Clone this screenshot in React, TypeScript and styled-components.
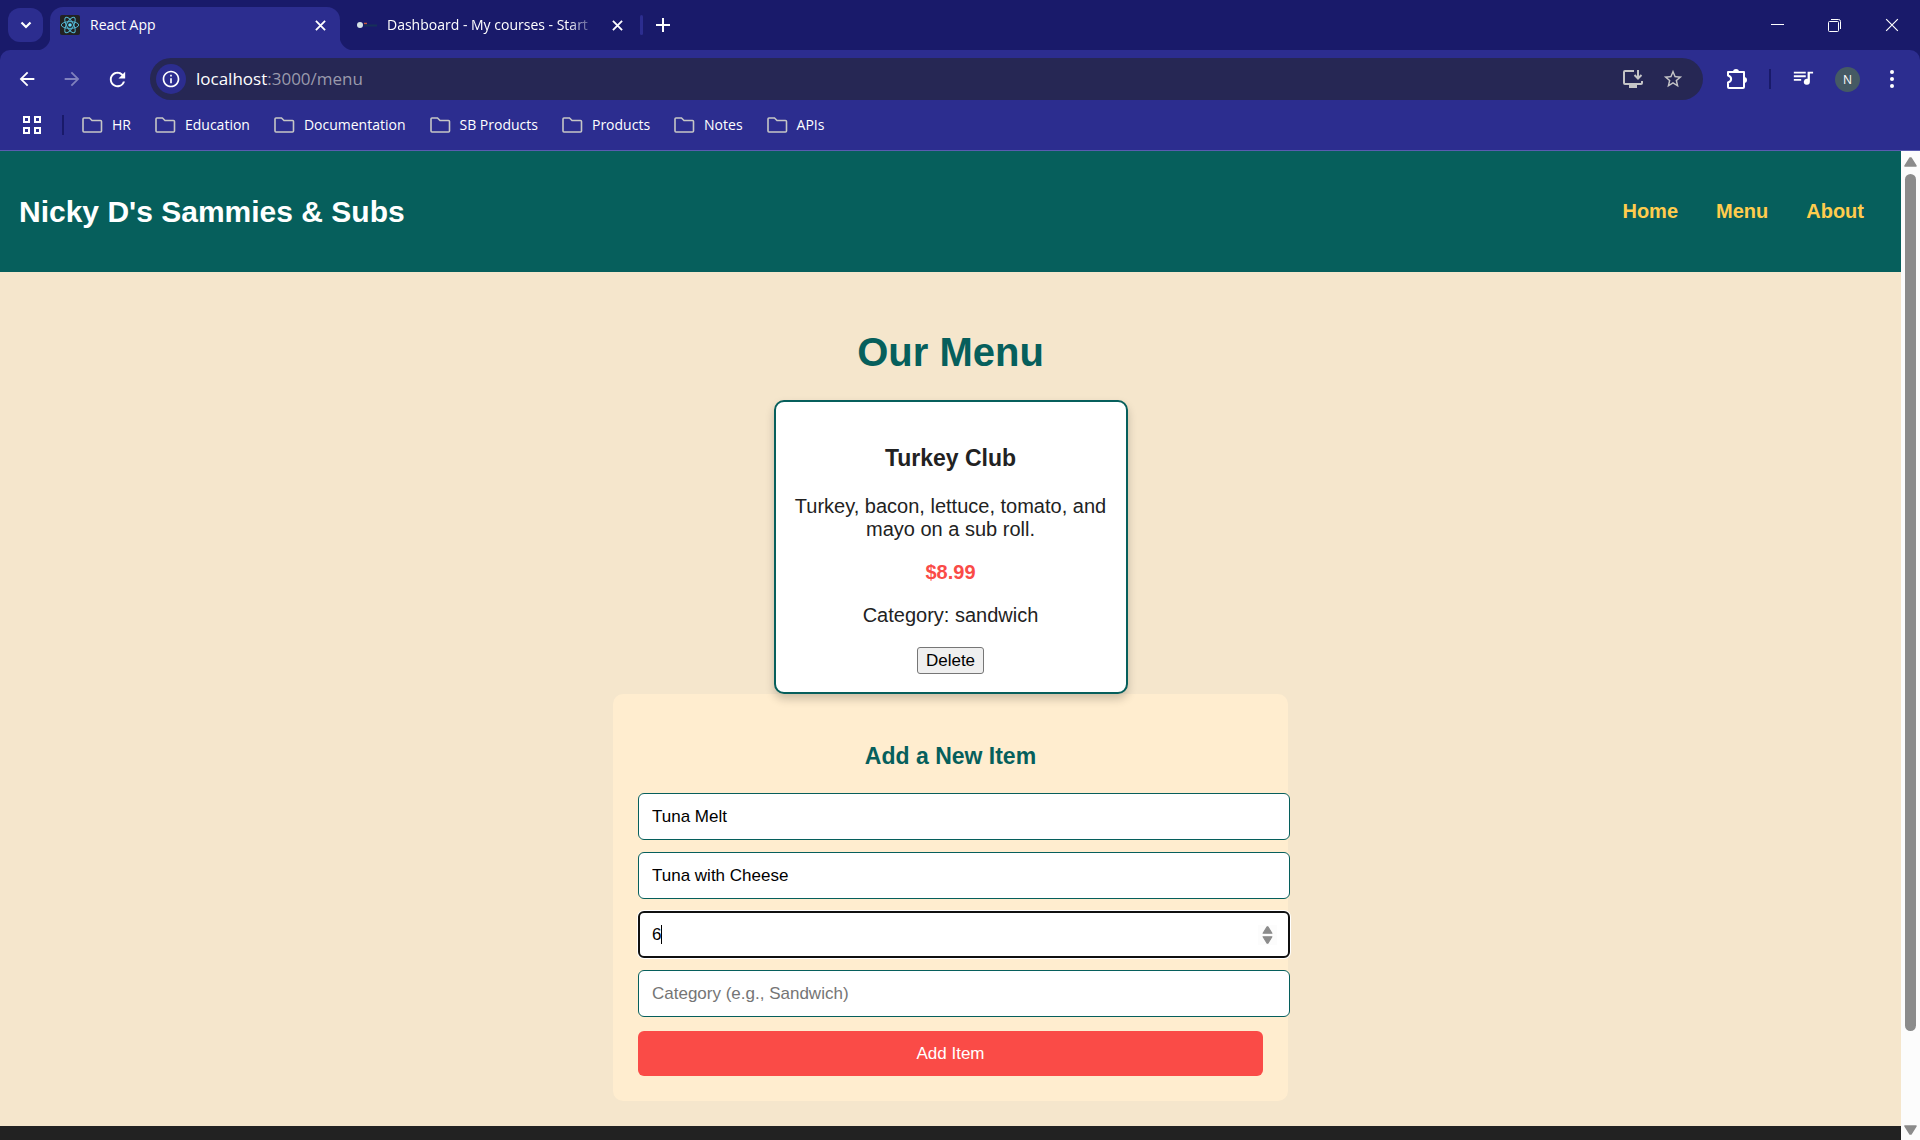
import React, { useState } from "react";
import styled, { createGlobalStyle, css } from "styled-components";

const UI_FONT = `"Open Sans", "Noto Sans", sans-serif`;
const PAGE_FONT = `"Liberation Sans", Arial, sans-serif`;

const color = {
  strip: "#191a6a",
  bar: "#2c2d8f",
  omnibox: "#262754",
  teal: "#065f5c",
  cream: "#f5e6cc",
  panel: "#ffedcf",
  red: "#fa4b47",
  yellow: "#ffcc4d",
  ink: "#222222",
};

const GlobalStyle = createGlobalStyle`
  * { box-sizing: border-box; }
  body { margin: 0; overflow: hidden; }
  button { font: inherit; cursor: pointer; }
`;

const Window = styled.div`
  display: flex;
  flex-direction: column;
  height: 100vh;
  background: ${color.strip};
  font-family: ${UI_FONT};
  color: #fff;
`;

/* ---------- tab strip ---------- */

const TabStrip = styled.header`
  display: flex;
  align-items: flex-end;
  height: 50px;
  padding-left: 8px;
`;

const TabSearch = styled.button`
  display: grid;
  place-items: center;
  width: 35px;
  height: 34px;
  margin: 0 7px 8px 0;
  padding: 0;
  border: 0;
  border-radius: 12px;
  background: ${color.bar};
`;

const Tab = styled.div<{ $active?: boolean }>`
  position: relative;
  display: flex;
  align-items: center;
  gap: 10px;
  width: 290px;
  height: 43px;
  padding: 0 10px 7px 10px;
  font-size: 14px;
  line-height: 20px;
  ${(p) =>
    p.$active
      ? css`
          border-radius: 13px 13px 0 0;
          background: ${color.bar};
          &::before,
          &::after {
            content: "";
            position: absolute;
            bottom: 0;
            width: 14px;
            height: 14px;
          }
          &::before {
            right: 100%;
            background: radial-gradient(circle at 0 0, transparent 14px, ${color.bar} 15px);
          }
          &::after {
            left: 100%;
            background: radial-gradient(circle at 100% 0, transparent 14px, ${color.bar} 15px);
          }
        `
      : css`
          padding-left: 17px;
          padding-right: 3px;
        `}
`;

const TabTitle = styled.span<{ $fade?: boolean }>`
  flex: 1;
  overflow: hidden;
  white-space: nowrap;
  ${(p) => p.$fade && css`mask-image: linear-gradient(to right, #000 86%, transparent);`}
`;

const IconButton = styled.button<{ $w?: number }>`
  display: grid;
  place-items: center;
  flex: none;
  width: ${(p) => p.$w ?? 20}px;
  height: 30px;
  padding: 0;
  border: 0;
  background: none;
  color: inherit;
  svg { display: block; }
`;

const TabDivider = styled.i`
  width: 3px;
  height: 20px;
  margin: 0 10px 15px 10px;
  border-radius: 2px;
  background: ${color.bar};
`;

const NewTabSlot = styled.div`
  padding-bottom: 10px;
`;

const WindowControls = styled.div`
  display: flex;
  align-self: flex-start;
  margin-left: auto;
  padding-top: 10px;
`;

/* ---------- toolbar ---------- */

const Toolbar = styled.div`
  display: flex;
  align-items: center;
  height: 58px;
  padding: 0 12px 0 10px;
  border-radius: 10px 10px 0 0;
  background: ${color.bar};
`;

const NavButtons = styled.div`
  display: flex;
  gap: 11px;
  margin-right: 16px;
`;

const Omnibox = styled.div`
  display: flex;
  align-items: center;
  flex: 1;
  height: 42px;
  padding: 0 14px 0 6px;
  border-radius: 21px;
  background: ${color.omnibox};
  color: #c4c4c6;
`;

const SiteInfo = styled.button`
  display: grid;
  place-items: center;
  width: 30px;
  height: 30px;
  padding: 0;
  border: 0;
  border-radius: 50%;
  background: ${color.bar};
`;

const Address = styled.div`
  flex: 1;
  margin-left: 10px;
  color: #9a9aac;
  font-size: 17px;
  line-height: 24px;
  strong { color: #fff; font-weight: 400; }
`;

const OmniActions = styled.div`
  display: flex;
  gap: 8px;
`;

const ToolbarActions = styled.div`
  display: flex;
  align-items: center;
  margin-left: 18px;
`;

const BarDivider = styled.i<{ $gap: number }>`
  flex: none;
  width: 2px;
  height: 20px;
  margin: 0 ${(p) => p.$gap}px;
  background: ${color.strip};
`;

const Avatar = styled.button`
  width: 25px;
  height: 25px;
  margin: 0 16px;
  padding: 0;
  border: 0;
  border-radius: 50%;
  background: #455a64;
  color: #fff;
  font-size: 12px;
  line-height: 25px;
`;

/* ---------- bookmarks ---------- */

const Bookmarks = styled.nav`
  display: flex;
  align-items: center;
  height: 43px;
  padding: 0 17px 8px 17px;
  border-bottom: 1px solid #5a5bb0;
  background: ${color.bar};
`;

const BookmarkList = styled.div`
  display: flex;
  gap: 24px;
  padding-left: 3px;
`;

const Bookmark = styled.button`
  display: flex;
  align-items: center;
  gap: 9px;
  padding: 0;
  border: 0;
  background: none;
  color: #fff;
  font-size: 14px;
  line-height: 20px;
  white-space: nowrap;
`;

/* ---------- page ---------- */

const Viewport = styled.div`
  display: flex;
  flex: 1;
  min-height: 0;
`;

const Page = styled.div`
  flex: 1;
  overflow: hidden;
  background: ${color.cream};
  color: ${color.ink};
  font-family: ${PAGE_FONT};
  font-size: 20px;
  line-height: 23px;
`;

const SiteHeader = styled.header`
  display: flex;
  align-items: center;
  justify-content: space-between;
  height: 121px;
  padding: 0 37px 0 19px;
  background: ${color.teal};
`;

const Brand = styled.h2`
  margin: 0;
  color: #fff;
  font-size: 30px;
  line-height: 34px;
`;

const SiteNav = styled.nav`
  display: flex;
  gap: 38px;
  a {
    color: ${color.yellow};
    font-weight: 700;
    text-decoration: none;
  }
`;

const Main = styled.main`
  display: flex;
  flex-direction: column;
  align-items: center;
  padding: 57px 25px 25px;
  text-align: center;
`;

const PageTitle = styled.h1`
  margin: 0 0 25px;
  color: ${color.teal};
  font-size: 40px;
  line-height: 46px;
`;

const Card = styled.article`
  position: relative;
  width: 354px;
  padding: 20px 19px 18px;
  border: 2px solid ${color.teal};
  border-radius: 10px;
  background: #fff;
  box-shadow: 0 5px 10px rgba(0, 0, 0, 0.2);
  p { margin: 0 0 20px; }
`;

const SectionTitle = styled.h3<{ $tone?: string }>`
  margin: 23px 0;
  color: ${(p) => p.$tone ?? "inherit"};
  font-size: 23px;
  line-height: 27px;
`;

const Price = styled.p`
  color: ${color.red};
  font-weight: 700;
`;

const DeleteButton = styled.button`
  display: block;
  height: 27px;
  margin: 0 auto;
  padding: 0 8px;
  border: 1px solid #767676;
  border-radius: 3px;
  background: #efefef;
  color: #000;
  font-size: 17px;
  line-height: 23px;
`;

const Form = styled.form`
  display: flex;
  flex-direction: column;
  width: 675px;
  padding: 26px 25px 25px;
  border-radius: 10px;
  background: ${color.panel};
`;

const Fields = styled.div`
  display: grid;
  gap: 12px;
  margin-bottom: 14px;
`;

const Field = styled.div`
  position: relative;
  width: calc(100% + 27px);
`;

const Input = styled.input<{ $focused?: boolean }>`
  display: block;
  width: 100%;
  height: 47px;
  padding: 0 13px;
  border: 1px solid ${color.teal};
  border-radius: 6px;
  background: #fff;
  color: #000;
  font-family: inherit;
  font-size: 17px;
  outline: none;
  appearance: textfield;
  &::placeholder { color: #757575; }
  &::-webkit-inner-spin-button { display: none; }
  ${(p) =>
    p.$focused &&
    css`
      padding: 0 12px;
      border: 2px solid #101010;
      box-shadow: 0 0 0 1px #fff;
    `}
`;

const Caret = styled.i`
  position: absolute;
  top: 14px;
  left: 23px;
  width: 1px;
  height: 19px;
  background: #000;
`;

const Spinner = styled.div`
  position: absolute;
  top: 14px;
  right: 13px;
  display: grid;
  place-items: center;
  width: 19px;
  height: 20px;
  background: #fcfcfc;
`;

const SubmitButton = styled.button`
  height: 45px;
  border: 0;
  border-radius: 6px;
  background: ${color.red};
  color: #fff;
  font-size: 17px;
`;

const Footer = styled.footer`
  height: 120px;
  background: #222;
`;

const ScrollBar = styled.div`
  display: flex;
  flex-direction: column;
  align-items: center;
  gap: 7px;
  width: 19px;
  padding: 6px 0 5px;
  background: #fcfcfc;
`;

const Thumb = styled.div`
  flex: none;
  width: 11px;
  height: calc(100% - 121px);
  border-radius: 6px;
  background: #8b8b8b;
`;

const ArrowSlot = styled.div<{ $end?: boolean }>`
  margin-top: ${(p) => (p.$end ? "auto" : "0")};
  line-height: 0;
`;

/* ---------- drawings ---------- */

const Cross = ({ size = 11, weight = 2 }: { size?: number; weight?: number }) => (
  <svg width={size} height={size} viewBox="0 0 12 12" stroke="#fff" strokeWidth={weight} fill="none">
    <path d="M1 1l10 10M11 1L1 11" />
  </svg>
);

const ReactLogo = () => (
  <svg width="20" height="20" viewBox="0 0 20 20" fill="none" stroke="#53b5cf" strokeWidth="1">
    <rect width="20" height="20" rx="2" fill="#222" stroke="none" />
    <ellipse cx="10" cy="10" rx="8.7" ry="3.4" />
    <ellipse cx="10" cy="10" rx="8.7" ry="3.4" transform="rotate(60 10 10)" />
    <ellipse cx="10" cy="10" rx="8.7" ry="3.4" transform="rotate(120 10 10)" />
    <circle cx="10" cy="10" r="1.8" fill="#61dafb" stroke="none" />
  </svg>
);

const CourseLogo = () => (
  <svg width="20" height="20" viewBox="0 0 20 20">
    <circle cx="3" cy="10" r="3" fill="#d5e2e6" />
    <path d="M7 8.500h3" stroke="#c8553d" strokeWidth="1.500" />
    <path d="M7 10.500h13" stroke="#163058" strokeWidth="2" />
  </svg>
);

const Glyph = ({ d, size = 24, fill = "#fff" }: { d: string; size?: number; fill?: string }) => (
  <svg width={size} height={size} viewBox="0 0 24 24" fill={fill}>
    <path d={d} />
  </svg>
);

const BACK = "M20 11H7.830l5.590-5.590L12 4l-8 8 8 8 1.410-1.410L7.830 13H20v-2z";
const FORWARD = "M12 4l-1.410 1.410L16.170 11H4v2h12.170l-5.580 5.590L12 20l8-8z";
const RELOAD =
  "M17.650 6.350A7.958 7.958 0 0 0 12 4c-4.420 0-7.990 3.580-7.990 8s3.570 8 7.990 8c3.730 0 6.840-2.550 7.730-6h-2.080A5.990 5.990 0 0 1 12 18c-3.310 0-6-2.690-6-6s2.690-6 6-6c1.660 0 3.140.690 4.220 1.780L13 11h7V4l-2.350 2.350z";
const INFO =
  "M11 7h2v2h-2zm0 4h2v6h-2zm1-9C6.480 2 2 6.480 2 12s4.480 10 10 10 10-4.480 10-10S17.520 2 12 2zm0 18c-4.410 0-8-3.590-8-8s3.590-8 8-8 8 3.590 8 8-3.590 8-8 8z";
const STAR =
  "M22 9.240l-7.190-.620L12 2 9.190 8.630 2 9.240l5.460 4.730L5.820 21 12 17.270 18.180 21l-1.630-7.030L22 9.240zM12 15.400l-3.760 2.270 1-4.280-3.320-2.880 4.380-.380L12 6.100l1.710 4.040 4.380.380-3.320 2.880 1 4.280L12 15.400z";
const QUEUE =
  "M2 4h13v2H2zM2 8h13v2H2zM2 12h8v2H2zM17 4h6v2h-3.500v9a3.300 3.300 0 1 1-2.500-3.200z";

const InstallIcon = () => (
  <svg width="22" height="20" viewBox="0 0 22 20" fill="none" stroke="#c4c4c6" strokeWidth="2">
    <path d="M12 2H3Q2 2 2 3v11q0 1 1 1h16q1 0 1-1v-2" />
    <path d="M16 1v8M12.500 6l3.500 3.500L19.500 6" />
    <path d="M7 17.500h8" strokeWidth="3" />
  </svg>
);

const PuzzleIcon = () => (
  <svg width="22" height="22" viewBox="0 0 22 22" fill="none" stroke="#fff" strokeWidth="2">
    <path d="M2 4h16v15q0 1-1 1H3q-1 0-1-1v-4.500c4.200-1.500 4.200-5.500 0-7z" strokeLinejoin="round" />
    <path d="M7 4a3 3 0 0 1 6 0zM18 9a3 3 0 0 1 0 6z" fill="#fff" stroke="none" />
  </svg>
);

const FolderIcon = () => (
  <svg width="21" height="17" viewBox="0 0 21 17" fill="none" stroke="#c6c6c6" strokeWidth="1.600">
    <path d="M2 1h5.500l2.500 2.500h8.500q1 0 1 1V14q0 1-1 1H2q-1 0-1-1V2q0-1 1-1z" />
  </svg>
);

const AppsIcon = () => (
  <svg width="20" height="20" viewBox="0 0 20 20" fill="none" stroke="#fff" strokeWidth="2">
    <path d="M2 2h5v5H2zM13 2h5v5h-5zM2 13h5v5H2zM13 13h5v5h-5z" />
  </svg>
);

const Arrow = ({ down, w = 13, h = 10 }: { down?: boolean; w?: number; h?: number }) => (
  <svg width={w} height={h} viewBox="0 0 13 10" fill="#8b8b8b" stroke="#8b8b8b" strokeWidth="1.500" strokeLinejoin="round">
    <path d={down ? "M1 1h11L7 9H6z" : "M1 9h11L7 1H6z"} />
  </svg>
);

const folders = ["HR", "Education", "Documentation", "SB Products", "Products", "Notes", "APIs"];

const item = {
  name: "Turkey Club",
  description: "Turkey, bacon, lettuce, tomato, and mayo on a sub roll.",
  price: "$8.99",
  category: "sandwich",
};

export default function App() {
  const [draft, setDraft] = useState({
    name: "Tuna Melt",
    description: "Tuna with Cheese",
    price: "6",
    category: "",
  });
  const set = (key: keyof typeof draft) => (e: React.ChangeEvent<HTMLInputElement>) =>
    setDraft({ ...draft, [key]: e.target.value });

  return (
    <Window>
      <GlobalStyle />
      <TabStrip>
        <TabSearch aria-label="Search tabs">
          <svg width="12" height="8" viewBox="0 0 12 8" fill="none" stroke="#fff" strokeWidth="2.200">
            <path d="M1.500 1.500L6 6l4.500-4.500" />
          </svg>
        </TabSearch>
        <Tab $active>
          <ReactLogo />
          <TabTitle>React App</TabTitle>
          <IconButton aria-label="Close tab"><Cross /></IconButton>
        </Tab>
        <Tab>
          <CourseLogo />
          <TabTitle $fade>Dashboard - My courses - Start</TabTitle>
          <IconButton aria-label="Close tab"><Cross /></IconButton>
        </Tab>
        <TabDivider />
        <NewTabSlot>
          <IconButton aria-label="New tab">
            <svg width="14" height="14" viewBox="0 0 14 14" stroke="#fff" strokeWidth="2">
              <path d="M7 0v14M0 7h14" />
            </svg>
          </IconButton>
        </NewTabSlot>
        <WindowControls>
          <IconButton $w={57} aria-label="Minimize">
            <svg width="13" height="3" viewBox="0 0 13 3" stroke="#fff"><path d="M0 .5h13" /></svg>
          </IconButton>
          <IconButton $w={57} aria-label="Restore">
            <svg width="13" height="13" viewBox="0 0 13 13" fill="none" stroke="#fff">
              <rect x=".5" y="2.500" width="10" height="10" rx="1" />
              <path d="M3 .5h7.500q2 0 2 2V10" />
            </svg>
          </IconButton>
          <IconButton $w={57} aria-label="Close"><Cross size={14} weight={1} /></IconButton>
        </WindowControls>
      </TabStrip>

      <Toolbar>
        <NavButtons>
          <IconButton $w={34} aria-label="Back"><Glyph d={BACK} size={22} /></IconButton>
          <IconButton $w={34} aria-label="Forward"><Glyph d={FORWARD} size={22} fill="#8081bd" /></IconButton>
          <IconButton $w={34} aria-label="Reload"><Glyph d={RELOAD} size={23} /></IconButton>
        </NavButtons>
        <Omnibox>
          <SiteInfo aria-label="Site information"><Glyph d={INFO} size={20} /></SiteInfo>
          <Address><strong>localhost</strong>:3000/menu</Address>
          <OmniActions>
            <IconButton $w={32} aria-label="Install app"><InstallIcon /></IconButton>
            <IconButton $w={32} aria-label="Bookmark this page"><Glyph d={STAR} size={22} fill="#c4c4c6" /></IconButton>
          </OmniActions>
        </Omnibox>
        <ToolbarActions>
          <IconButton $w={32} aria-label="Extensions"><PuzzleIcon /></IconButton>
          <BarDivider $gap={16} />
          <IconButton $w={32} aria-label="Media controls"><Glyph d={QUEUE} size={22} /></IconButton>
          <Avatar aria-label="Profile">N</Avatar>
          <IconButton $w={32} aria-label="More">
            <svg width="4" height="18" viewBox="0 0 4 18" fill="#fff">
              <circle cx="2" cy="2" r="2" /><circle cx="2" cy="9" r="2" /><circle cx="2" cy="16" r="2" />
            </svg>
          </IconButton>
        </ToolbarActions>
      </Toolbar>

      <Bookmarks>
        <IconButton $w={30} aria-label="Apps"><AppsIcon /></IconButton>
        <BarDivider $gap={15} />
        <BookmarkList>
          {folders.map((name) => (
            <Bookmark key={name}><FolderIcon />{name}</Bookmark>
          ))}
        </BookmarkList>
      </Bookmarks>

      <Viewport>
        <Page>
          <SiteHeader>
            <Brand>Nicky D's Sammies &amp; Subs</Brand>
            <SiteNav>
              <a href="#home">Home</a>
              <a href="#menu">Menu</a>
              <a href="#about">About</a>
            </SiteNav>
          </SiteHeader>
          <Main>
            <PageTitle>Our Menu</PageTitle>
            <Card>
              <SectionTitle>{item.name}</SectionTitle>
              <p>{item.description}</p>
              <Price>{item.price}</Price>
              <p>Category: {item.category}</p>
              <DeleteButton>Delete</DeleteButton>
            </Card>
            <Form onSubmit={(e) => e.preventDefault()}>
              <SectionTitle $tone={color.teal}>Add a New Item</SectionTitle>
              <Fields>
                <Field>
                  <Input aria-label="Item name" value={draft.name} onChange={set("name")} />
                </Field>
                <Field>
                  <Input aria-label="Description" value={draft.description} onChange={set("description")} />
                </Field>
                <Field>
                  <Input $focused type="number" aria-label="Price" value={draft.price} onChange={set("price")} />
                  <Caret />
                  <Spinner>
                    <Arrow w={11} h={8} />
                    <Arrow w={11} h={8} down />
                  </Spinner>
                </Field>
                <Field>
                  <Input
                    aria-label="Category"
                    placeholder="Category (e.g., Sandwich)"
                    value={draft.category}
                    onChange={set("category")}
                  />
                </Field>
              </Fields>
              <SubmitButton type="submit">Add Item</SubmitButton>
            </Form>
          </Main>
          <Footer />
        </Page>
        <ScrollBar aria-hidden="true">
          <ArrowSlot><Arrow /></ArrowSlot>
          <Thumb />
          <ArrowSlot $end><Arrow down /></ArrowSlot>
        </ScrollBar>
      </Viewport>
    </Window>
  );
}
